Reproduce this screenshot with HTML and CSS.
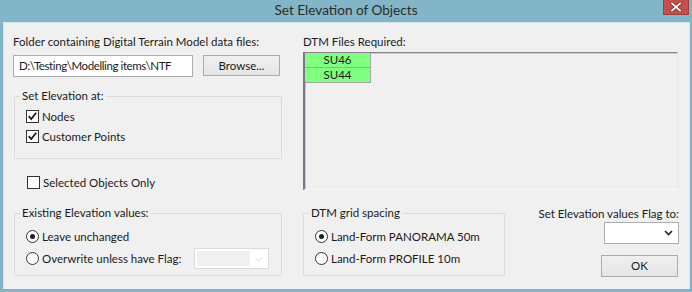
FILE: index.html
```html
<!DOCTYPE html>
<html lang="en">
<head>
    <meta charset="UTF-8">
    <title>Set Elevation of Objects</title>
    <link rel="stylesheet" href="styles.css">
</head>
<body>
<div class="window">
    <div class="titlebar">
        <span></span>
        <span class="title">Set Elevation of Objects</span>
        <span class="closebtn">
            <svg width="12" height="10" viewBox="0 0 12 10">
                <path d="M2 1.5 L10 8.5 M10 1.5 L2 8.5" stroke="#8e2a22" stroke-width="3.6" stroke-linecap="square"/>
                <path d="M2 1.5 L10 8.5 M10 1.5 L2 8.5" stroke="#ffffff" stroke-width="1.8" stroke-linecap="square"/>
            </svg>
        </span>
    </div>
    <div class="client">
        <div class="top">
            <div class="leftcol">
                <div class="caption">Folder containing Digital Terrain Model data files:</div>
                <div class="pathrow">
                    <div class="textbox">D:\Testing\Modelling items\NTF</div>
                    <div class="btn browse">Browse...</div>
                </div>
                <fieldset class="group setat">
                    <legend>Set Elevation at:</legend>
                    <div class="opt">
                        <span class="checkbox"><svg width="11" height="11" viewBox="0 0 11 11"><path d="M1.8 5.2 L4.2 8 L9.2 1.8" fill="none" stroke="#1e1e1e" stroke-width="1.8"/></svg></span>
                        Nodes
                    </div>
                    <div class="opt">
                        <span class="checkbox"><svg width="11" height="11" viewBox="0 0 11 11"><path d="M1.8 5.2 L4.2 8 L9.2 1.8" fill="none" stroke="#1e1e1e" stroke-width="1.8"/></svg></span>
                        Customer Points
                    </div>
                </fieldset>
                <div class="opt single">
                    <span class="checkbox"></span>
                    Selected Objects Only
                </div>
            </div>
            <div class="rightcol">
                <div class="caption">DTM Files Required:</div>
                <div class="listbox">
                    <div class="tile">SU46</div>
                    <div class="tile">SU44</div>
                </div>
            </div>
        </div>
        <div class="bottom">
            <fieldset class="group existing">
                <legend>Existing Elevation values:</legend>
                <div class="opt radio-row">
                    <span class="radio on"></span>
                    Leave unchanged
                </div>
                <div class="opt radio-row">
                    <span class="radio"></span>
                    Overwrite unless have Flag:
                    <span class="combo disabled"><span class="combo-text"></span><span class="arrow">&#x2335;</span></span>
                </div>
            </fieldset>
            <fieldset class="group spacing">
                <legend>DTM grid spacing</legend>
                <div class="opt radio-row">
                    <span class="radio on"></span>
                    Land-Form PANORAMA 50m
                </div>
                <div class="opt radio-row">
                    <span class="radio"></span>
                    Land-Form PROFILE 10m
                </div>
            </fieldset>
            <div class="flagcol">
                <div class="caption">Set Elevation values Flag to:</div>
                <div class="combo flag">
                    <span class="combo-text"></span>
                    <svg width="9" height="6" viewBox="0 0 9 6"><path d="M1 1 L4.5 4.5 L8 1" fill="none" stroke="#222" stroke-width="1.6"/></svg>
                </div>
                <div class="btn ok">OK</div>
            </div>
        </div>
    </div>
</div>
</body>
</html>
```

FILE: styles.css
```css
*{
    margin: 0;
    padding: 0;
    box-sizing: border-box;
}
body{
    width: 692px;
    height: 292px;
    background: #82b5c7;
    font-family: Lato, "Liberation Sans", sans-serif;
    font-size: 11.5px;
    color: #1a1a1a;
    overflow: hidden;
}
.window{
    width: 692px;
    height: 292px;
}
.titlebar{
    height: 22px;
    display: grid;
    grid-template-columns: 1fr auto 1fr;
    align-items: start;
}
.title{
    font-size: 13.6px;
    line-height: 20px;
    color: #2b2b2b;
}
.closebtn{
    justify-self: end;
    margin-right: 3px;
    width: 26px;
    height: 15px;
    background: #c4504b;
    border: 1px solid #95423c;
    border-top: none;
    display: flex;
    align-items: center;
    justify-content: center;
}
.client{
    margin-left: 3px;
    width: 687px;
    height: 267px;
    background: #f0f0f0;
    border: 1px solid #d8e6ec;
    border-bottom: none;
    padding: 12px 10px 0 9px;
}
.caption{
    line-height: 14px;
    white-space: nowrap;
}
.top{
    display: flex;
    height: 157px;
}
.leftcol{
    width: 269px;
}
.rightcol{
    margin-left: 21px;
    width: 375px;
}
.pathrow{
    display: flex;
    margin-top: 6px;
}
.textbox{
    width: 180px;
    height: 22px;
    background: #fff;
    border: 1px solid #abadb3;
    padding: 0 5px;
    line-height: 20px;
    letter-spacing: -0.4px;
    white-space: nowrap;
    overflow: hidden;
}
.btn{
    height: 21px;
    width: 77px;
    text-align: center;
    line-height: 19px;
    background: linear-gradient(#f0f0f0, #e5e5e5);
    border: 1px solid #acacac;
}
.browse{
    margin-left: 10px;
    border-color: #7eb4ea;
}
.group{
    border: 1px solid #dcdcdc;
    border-radius: 2px;
    padding: 3px 5px 0 5px;
}
.group legend{
    padding: 0 2px;
    line-height: 14px;
}
.setat{
    margin: 12px 0 0 1px;
    width: 268px;
    height: 70px;
}
.opt{
    display: flex;
    align-items: center;
    height: 20px;
    margin-left: 6px;
    white-space: nowrap;
}
.checkbox{
    width: 13px;
    height: 13px;
    background: #fff;
    border: 1px solid #333;
    margin-right: 3px;
    display: flex;
    align-items: center;
    justify-content: center;
}
.single{
    margin: 13px 0 0 14px;
}
.listbox{
    margin-top: 3px;
    height: 138px;
    border-top: 1px solid #8a8590;
    border-left: 2px solid #7d7585;
    border-right: 1px solid #e8eaea;
    border-bottom: 1px solid #f8f8f8;
    box-shadow: inset 1px 1px 0 #c9c9c9;
    background: #f0f0f0;
}
.tile{
    width: 66px;
    height: 15px;
    line-height: 14px;
    text-align: center;
    background: #80ff80;
    border-right: 1px solid #a5a5a5;
    border-bottom: 1px solid #a5a5a5;
}
.bottom{
    display: flex;
    margin-top: 14px;
}
.existing{
    margin-left: 1px;
    width: 268px;
    height: 70px;
    padding-top: 5px;
}
.spacing{
    margin-left: 21px;
    width: 202px;
    height: 70px;
    padding-top: 5px;
}
.radio-row{
    height: 22px;
}
.radio{
    width: 13px;
    height: 13px;
    border-radius: 50%;
    background: #fff;
    border: 1px solid #333;
    margin-right: 3px;
    display: flex;
    align-items: center;
    justify-content: center;
}
.radio.on::after{
    content: "";
    width: 5px;
    height: 5px;
    border-radius: 50%;
    background: #1e1e1e;
}
.combo{
    display: flex;
    align-items: center;
    background: #fff;
    border: 1px solid #abadb3;
}
.combo-text{
    flex: 1;
}
.combo.disabled{
    margin-left: auto;
    margin-right: 7px;
    width: 75px;
    height: 21px;
    border-color: #d9d9d9;
    padding: 2px;
}
.combo.disabled .combo-text{
    height: 100%;
    background: #f0f0f0;
}
.combo.disabled .arrow{
    width: 16px;
    text-align: center;
    color: #b5b5b5;
    font-size: 9px;
}
.flagcol{
    flex: 1;
    display: flex;
    flex-direction: column;
    align-items: flex-end;
    padding-top: 1px;
}
.combo.flag{
    margin-top: 1px;
    width: 75px;
    height: 22px;
    padding-right: 5px;
}
.ok{
    margin-top: 11px;
    margin-right: 1px;
    width: 77px;
    height: 22px;
    line-height: 20px;
}
```
